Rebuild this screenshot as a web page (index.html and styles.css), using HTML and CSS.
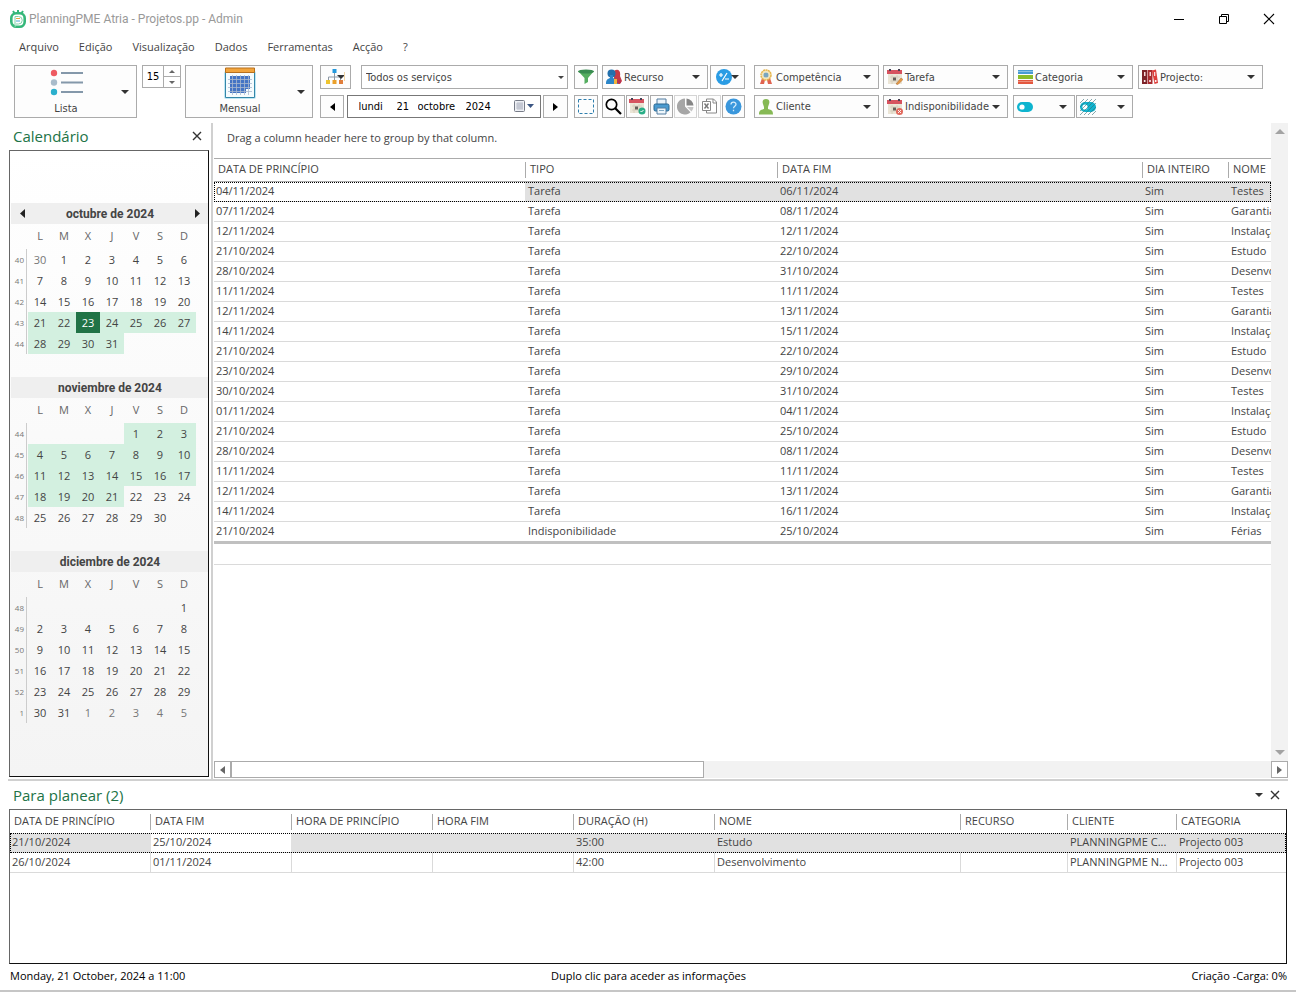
FILE: index.html
```html
<!DOCTYPE html>
<html lang="pt">
<head>
<meta charset="utf-8">
<title>PlanningPME Atria - Projetos.pp - Admin</title>
<link rel="stylesheet" href="styles.css">
</head>
<body>
<svg width="0" height="0" class="defs" aria-hidden="true">
  <symbol id="down" viewBox="0 0 8 4"><path d="M0 0h8L4 4z" fill="currentColor"/></symbol>
  <symbol id="cross" viewBox="0 0 10 10"><path d="M1 1l8 8M9 1l-8 8" stroke="currentColor" stroke-width="1.4" fill="none"/></symbol>
  <symbol id="cal" viewBox="0 0 16 16"><path d="M1 4h14v11H1z" fill="#ebe5d6"/><path d="M0 1h15v4H0z" fill="#d6535f"/><path d="M3 0v2M12 0v2" stroke="#454052" stroke-width="2"/><path d="M3 8h10M3 12h10M5 6v9M10 6v9" stroke="#d3cbb9" stroke-width=".8"/><path d="M6 8.500h3v3H6z" fill="#655f5a"/></symbol>
</svg>
<header class="titlebar">
  <svg class="logo" viewBox="0 0 16 18"><path d="M3 1l2 3M8 0v3M13 1l-2 3" stroke="#35b779" stroke-width="2"/><rect x="1.300" y="3.300" width="13.400" height="13.400" rx="5" fill="#fff" stroke="#35b779" stroke-width="2.600"/><path d="M5 17V6.500h3.500a3.500 3.500 0 0 1 0 7.500H6" fill="#fff" stroke="#7fd3a8" stroke-width="1"/><path d="M6 8.500h4" stroke="#e9a53d"/><path d="M6 11h4" stroke="#4aa5cf"/></svg>
  <h1>PlanningPME Atria - Projetos.pp - Admin</h1>
  <button class="win" aria-label="Minimizar"><svg viewBox="0 0 12 12"><path d="M1 6.500h10" stroke="#000"/></svg></button>
  <button class="win" aria-label="Restaurar"><svg viewBox="0 0 12 12"><path d="M1.500 3.500h7v7h-7zM3.500 3.500v-2h7v7h-2" stroke="#000" fill="none"/></svg></button>
  <button class="win" aria-label="Fechar"><svg viewBox="0 0 12 12"><path d="M1 1l10 10M11 1L1 11" stroke="#000" stroke-width="1.100"/></svg></button>
</header>
<nav class="menu"><a href="#">Arquivo</a><a href="#">Edição</a><a href="#">Visualização</a><a href="#">Dados</a><a href="#">Ferramentas</a><a href="#">Acção</a><a href="#">?</a></nav>

<div class="toolbar">
  <button class="box big lista"><span class="face"><svg width="33" height="32" viewBox="0 0 33 32"><circle cx="4" cy="6" r="3.200" fill="#ee5b62"/><circle cx="4" cy="15.500" r="3.200" fill="#a9bccb"/><circle cx="4" cy="25" r="3.200" fill="#2bb0cd"/><path d="M11 6h22M11 15.500h22M11 25h22" stroke="#8498aa" stroke-width="2"/></svg>Lista</span><svg class="arrow"><use href="#down"/></svg></button>
  <div class="spin"><input type="text" value="15" aria-label="Intervalo"><div><button aria-label="Mais"><svg viewBox="0 0 6 3"><path d="M0 3h6L3 0z" fill="#666"/></svg></button><button aria-label="Menos"><svg viewBox="0 0 6 3"><path d="M0 0h6L3 3z" fill="#666"/></svg></button></div></div>
  <button class="box big mensual"><span class="face"><svg width="32" height="32" viewBox="0 0 32 32"><rect x="0" y="4" width="32" height="28" rx="2" fill="#bfe6f3"/><path d="M1.500 5h29v25.500h-29z" fill="#f5fbfd" stroke="#3486a8"/><path d="M1.500 1h29v4.500h-29z" fill="#f2a43c" stroke="#b8701d"/><path d="M6 9h20v13h-4v4H6z" fill="#4474c4"/><path d="M4 12.500h24M4 16.500h24M4 20.500h24M4 24.500h24M8.500 8v20M12.500 8v20M16.500 8v20M20.500 8v20M24.500 8v20" stroke="#a9b9cf" stroke-width=".8"/></svg>Mensual</span><svg class="arrow"><use href="#down"/></svg></button>

  <div class="stack services">
    <div class="line spread">
      <button class="box w31" aria-label="Organização"><svg width="20" height="16" viewBox="0 0 20 16"><path d="M8.500 4v4M2.500 11V8h12v3M8.500 8v3" stroke="#8e99a5" fill="none"/><path d="M6.500 0h4v4h-4z" fill="#2499dd"/><path d="M0 11h4v4H0z" fill="#eec42f"/><path d="M6.500 11h4v4h-4z" fill="#eaa02b"/><path d="M13 11h4v4h-4z" fill="#e07e3c"/><path d="M11 6h8l-4 4z" fill="#333"/><path d="M18.500 3v9" stroke="#f1d5a6"/></svg></button>
      <div class="combo"><select aria-label="Serviços"><option>Todos os serviços</option></select><svg width="6" height="3"><use href="#down"/></svg></div>
    </div>
    <div class="line spread">
      <button class="box w24" aria-label="Anterior"><svg width="5" height="8" viewBox="0 0 5 8"><path d="M5 0v8L0 4z"/></svg></button>
      <div class="date" role="group" aria-label="Data"><input class="dow" value="lundi" aria-label="Dia da semana"><input class="dd" value="21" aria-label="Dia"><input class="mm" value="octobre" aria-label="Mês"><input class="yy" value="2024" aria-label="Ano"><button aria-label="Abrir calendário"><svg width="21" height="13" viewBox="0 0 21 13"><rect x=".5" y=".5" width="10" height="11" rx="1" fill="#eef0f5" stroke="#777c88"/><path d="M2 4h7M2 6h7M2 8h7M4 2v8M6 2v8M8 2v8" stroke="#a7adba" stroke-width=".7"/><path d="M13 4h7l-3.500 4z" fill="#3b5683"/></svg></button></div>
      <button class="box w25" aria-label="Seguinte"><svg width="5" height="8" viewBox="0 0 5 8"><path d="M0 0v8l5-4z"/></svg></button>
    </div>
  </div>

  <div class="stack w24">
    <button class="box" aria-label="Filtro"><svg width="16" height="16" viewBox="0 0 16 16"><path d="M0 2l6.500 7v6L10 13V9l6-7z" fill="#55ad60"/><ellipse cx="8" cy="2.500" rx="8" ry="2" fill="#398b50"/></svg></button>
    <button class="box" aria-label="Seleção"><svg width="16" height="15" viewBox="0 0 16 15"><path d="M.5.5h15v14H.5z" fill="none" stroke="#2f7fae" stroke-dasharray="3 2"/></svg></button>
  </div>

  <div class="stack tools">
    <div class="line spread">
      <button class="box pick w106"><svg class="ico" viewBox="0 0 16 16"><path d="M8 2c4-3 7 0 6 5l2 5-2 3H8z" fill="#c63a46"/><circle cx="5.500" cy="4.500" r="4" fill="#2270ad"/><path d="M0 15c0-5 2-5 4-6V6h3v3c3 1 5 2 5 6z" fill="#2b86c9"/><path d="M8 10h3v5H8z" fill="#efb33c"/><path d="M11 11h4v3h-4z" fill="#b93251"/></svg><span>Recurso</span><svg class="arrow"><use href="#down"/></svg></button>
      <button class="box w35" aria-label="Cálculo"><svg width="24" height="18" viewBox="0 0 24 18"><circle cx="8" cy="9" r="8" fill="#2a9ce4"/><path d="M3 7h4M5 5v4M6 13l5-8M9 11h4" stroke="#fff" stroke-width="1.200"/><path d="M15 7h8l-4 4z" fill="#333"/></svg></button>
    </div>
    <div class="line tight">
      <button class="box" aria-label="Procurar"><svg width="17" height="17" viewBox="0 0 17 17"><circle cx="6.500" cy="6.500" r="5.200" fill="none" stroke="#000" stroke-width="1.700"/><path d="M10 10l6 6" stroke="#000" stroke-width="2.200"/></svg></button>
      <button class="box" aria-label="Validar"><svg width="17" height="17" viewBox="0 0 17 17"><use href="#cal" width="16" height="16"/><circle cx="13" cy="13" r="3.500" fill="#2aae87"/><path d="M11.500 13l1 1 2-2" stroke="#fff" fill="none"/></svg></button>
      <button class="box" aria-label="Imprimir"><svg width="17" height="17" viewBox="0 0 17 17"><path d="M4 6V1h9v5" fill="#eaf3fa" stroke="#527da0"/><rect x="1" y="6" width="15" height="7" rx="1.500" fill="#4a9bd0" stroke="#27658f"/><path d="M4 10h9v6H4z" fill="#eef6fb" stroke="#527da0"/><path d="M6 12.500h5" stroke="#7faac5"/></svg></button>
      <button class="box off" aria-label="Gráfico"><svg width="17" height="17" viewBox="0 0 17 17"><path d="M8 8.500V.5a8 8 0 1 0 5.500 13.700z" fill="#a6a6a6"/><path d="M9.500 7.500V.5a7.500 7.500 0 0 1 7 7z" fill="#868686"/><path d="M10 9h6.500a7 7 0 0 1-2 4.500z" fill="#c5c5c5"/></svg></button>
      <button class="box off" aria-label="Exportar Excel"><svg width="17" height="17" viewBox="0 0 17 17"><path d="M5.500 3V1h7l3 3v11h-10v-3" fill="#fff" stroke="#888"/><path d="M12 1v4h4" fill="none" stroke="#888"/><path d="M1.500 3.500h8v9h-8z" fill="#fff" stroke="#888"/><path d="M3.500 5.500l4 5M7.500 5.500l-4 5" stroke="#777" stroke-width="1.400"/></svg></button>
      <button class="box" aria-label="Ajuda"><svg width="17" height="17" viewBox="0 0 17 17"><circle cx="8.500" cy="8.500" r="8" fill="#3a97dc"/><path d="M6 6.500C6 3.500 11 3.500 11 6.300c0 2-2.500 2-2.500 4M8.500 11.800v1.500" stroke="#d5ecfb" stroke-width="1.300" fill="none"/></svg></button>
    </div>
  </div>

  <div class="stack filters">
    <button class="box pick"><svg class="ico" viewBox="0 0 16 16"><path d="M4 9l-2 6h4l1-4zM12 9l2 6h-4l-1-4z" fill="#df624f"/><circle cx="8" cy="6" r="5" fill="#f4e5bc" stroke="#e7b64d" stroke-width="1.500" stroke-dasharray="2 .5"/><circle cx="8" cy="6" r="2.600" fill="#8ebad0"/><path d="M6 5h4M6 7h4" stroke="#56809d" stroke-width=".7"/></svg><span>Competência</span><svg class="arrow"><use href="#down"/></svg></button>
    <button class="box pick"><svg class="ico" viewBox="0 0 16 16"><path d="M8 0c3 0 4 2 3 5l-1 3v2c4 1 5 2 5 5.500H1C1 12 2 11 6 10V8L5 5C4 2 5 0 8 0z" fill="#86b955"/></svg><span>Cliente</span><svg class="arrow"><use href="#down"/></svg></button>
  </div>
  <div class="stack filters">
    <button class="box pick"><svg class="ico" viewBox="0 0 16 16"><use href="#cal" width="16" height="16"/><path d="M9 15l5-6 2 1.500-5 5z" fill="#e69945" stroke="#a86a31" stroke-width=".5"/></svg><span>Tarefa</span><svg class="arrow"><use href="#down"/></svg></button>
    <button class="box pick"><svg class="ico" viewBox="0 0 16 16"><use href="#cal" width="16" height="16"/><circle cx="12.500" cy="12.500" r="3.500" fill="#e1695d"/><path d="M11 11l3 3M14 11l-3 3" stroke="#fff" stroke-width=".9"/></svg><span>Indisponibilidade</span><svg class="arrow"><use href="#down"/></svg></button>
  </div>
  <div class="stack cats">
    <button class="box pick"><svg class="ico" viewBox="0 0 16 16"><path d="M1 1h15v4H1z" fill="#489bd3"/><path d="M1 6h15v4H1z" fill="#8abd2a"/><path d="M1 11h15v4H1z" fill="#e3573f"/><path d="M1 2.500h15" stroke="#b6dcf1" stroke-width=".6"/><path d="M1 12.500h15" stroke="#f3b3a5" stroke-width=".6"/></svg><span>Categoria</span><svg class="arrow"><use href="#down"/></svg></button>
    <div class="line tight">
      <button class="box pick w62" aria-label="Estado"><svg class="ico" viewBox="0 0 16 16"><rect x="0" y="3" width="16" height="10" rx="5" fill="#0eb4cf"/><circle cx="5" cy="8" r="2.600" fill="#fff"/></svg><span></span><svg class="arrow"><use href="#down"/></svg></button>
      <button class="box pick w57" aria-label="Estado parcial"><svg class="ico" viewBox="0 0 16 16"><rect x="0" y="3" width="16" height="10" rx="5" fill="#0eb4cf"/><circle cx="5" cy="8" r="2.600" fill="#fff"/><path d="M0 4l4-4M0 8l8-8M0 12L12 0M0 16L16 0M4 16L16 4M8 16l8-8M12 16l4-4" stroke="#356e79" stroke-width=".6"/></svg><span></span><svg class="arrow"><use href="#down"/></svg></button>
    </div>
  </div>
  <div class="stack filters">
    <button class="box pick"><svg class="ico" viewBox="0 0 16 16"><path d="M0 1h5v14H0z" fill="#7d2329"/><path d="M5.500 1h5v14h-5z" fill="#a92c31"/><path d="M10 1.500L14 .5l2 13.500-3.500 1z" fill="#dd3f3c"/><path d="M2 3h1.500v4H2zM7.500 3H9v4H7.500zM12 3h1.300v4H12z" fill="#f6dada"/><circle cx="2.700" cy="12" r="1" fill="#fff"/><circle cx="8" cy="12" r="1" fill="#fff"/><circle cx="13.700" cy="12" r="1" fill="#fff"/></svg><span>Projecto:</span><svg class="arrow"><use href="#down"/></svg></button>
  </div>
</div>

<div class="work">
  <aside class="side">
    <div class="panel-head"><h2>Calendário</h2><button aria-label="Fechar calendário"><svg width="10" height="10"><use href="#cross"/></svg></button></div>
    <div class="months">
      <section class="month">
        <h3><button aria-label="Mês anterior"><svg width="5" height="9" viewBox="0 0 5 9"><path d="M5 0v9L0 4.500z" fill="#222"/></svg></button><span>octubre de 2024</span><button aria-label="Mês seguinte"><svg width="5" height="9" viewBox="0 0 5 9"><path d="M0 0v9l5-4.500z" fill="#222"/></svg></button></h3>
        <table>
          <thead><tr><td></td><th>L</th><th>M</th><th>X</th><th>J</th><th>V</th><th>S</th><th>D</th></tr></thead>
          <tbody>
          <tr><th>40</th><td class="out">30</td><td>1</td><td>2</td><td>3</td><td>4</td><td>5</td><td>6</td></tr>
          <tr><th>41</th><td>7</td><td>8</td><td>9</td><td>10</td><td>11</td><td>12</td><td>13</td></tr>
          <tr><th>42</th><td>14</td><td>15</td><td>16</td><td>17</td><td>18</td><td>19</td><td>20</td></tr>
          <tr class="sel"><th>43</th><td>21</td><td>22</td><td class="today">23</td><td>24</td><td>25</td><td>26</td><td>27</td></tr>
          <tr class="sel"><th>44</th><td>28</td><td>29</td><td>30</td><td>31</td><td class="no"></td><td class="no"></td><td class="no"></td></tr>
          </tbody>
        </table>
      </section>
      <section class="month">
        <h3><span>noviembre de 2024</span></h3>
        <table>
          <thead><tr><td></td><th>L</th><th>M</th><th>X</th><th>J</th><th>V</th><th>S</th><th>D</th></tr></thead>
          <tbody>
          <tr class="sel"><th>44</th><td class="no"></td><td class="no"></td><td class="no"></td><td class="no"></td><td>1</td><td>2</td><td>3</td></tr>
          <tr class="sel"><th>45</th><td>4</td><td>5</td><td>6</td><td>7</td><td>8</td><td>9</td><td>10</td></tr>
          <tr class="sel"><th>46</th><td>11</td><td>12</td><td>13</td><td>14</td><td>15</td><td>16</td><td>17</td></tr>
          <tr class="sel"><th>47</th><td>18</td><td>19</td><td>20</td><td>21</td><td class="no">22</td><td class="no">23</td><td class="no">24</td></tr>
          <tr><th>48</th><td>25</td><td>26</td><td>27</td><td>28</td><td>29</td><td>30</td><td></td></tr>
          </tbody>
        </table>
      </section>
      <section class="month">
        <h3><span>diciembre de 2024</span></h3>
        <table>
          <thead><tr><td></td><th>L</th><th>M</th><th>X</th><th>J</th><th>V</th><th>S</th><th>D</th></tr></thead>
          <tbody>
          <tr><th>48</th><td></td><td></td><td></td><td></td><td></td><td></td><td>1</td></tr>
          <tr><th>49</th><td>2</td><td>3</td><td>4</td><td>5</td><td>6</td><td>7</td><td>8</td></tr>
          <tr><th>50</th><td>9</td><td>10</td><td>11</td><td>12</td><td>13</td><td>14</td><td>15</td></tr>
          <tr><th>51</th><td>16</td><td>17</td><td>18</td><td>19</td><td>20</td><td>21</td><td>22</td></tr>
          <tr><th>52</th><td>23</td><td>24</td><td>25</td><td>26</td><td>27</td><td>28</td><td>29</td></tr>
          <tr><th>1</th><td>30</td><td>31</td><td class="out">1</td><td class="out">2</td><td class="out">3</td><td class="out">4</td><td class="out">5</td></tr>
          </tbody>
        </table>
      </section>
    </div>
  </aside>

  <main class="list">
    <div class="view">
      <p class="group-hint">Drag a column header here to group by that column.</p>
      <table class="grid tasks">
        <colgroup><col class="c311"><col class="c252"><col><col class="c86"><col class="c43"></colgroup>
        <thead><tr><th><span>DATA DE PRINCÍPIO</span></th><th><span>TIPO</span></th><th><span>DATA FIM</span></th><th><span>DIA INTEIRO</span></th><th><span>NOME</span></th></tr></thead>
        <tbody>
        <tr class="cur"><td class="focus">04/11/2024</td><td>Tarefa</td><td>06/11/2024</td><td>Sim</td><td>Testes</td></tr>
        <tr><td>07/11/2024</td><td>Tarefa</td><td>08/11/2024</td><td>Sim</td><td>Garantia</td></tr>
        <tr><td>12/11/2024</td><td>Tarefa</td><td>12/11/2024</td><td>Sim</td><td>Instalação</td></tr>
        <tr><td>21/10/2024</td><td>Tarefa</td><td>22/10/2024</td><td>Sim</td><td>Estudo</td></tr>
        <tr><td>28/10/2024</td><td>Tarefa</td><td>31/10/2024</td><td>Sim</td><td>Desenvolvimento</td></tr>
        <tr><td>11/11/2024</td><td>Tarefa</td><td>11/11/2024</td><td>Sim</td><td>Testes</td></tr>
        <tr><td>12/11/2024</td><td>Tarefa</td><td>13/11/2024</td><td>Sim</td><td>Garantia</td></tr>
        <tr><td>14/11/2024</td><td>Tarefa</td><td>15/11/2024</td><td>Sim</td><td>Instalação</td></tr>
        <tr><td>21/10/2024</td><td>Tarefa</td><td>22/10/2024</td><td>Sim</td><td>Estudo</td></tr>
        <tr><td>23/10/2024</td><td>Tarefa</td><td>29/10/2024</td><td>Sim</td><td>Desenvolvimento</td></tr>
        <tr><td>30/10/2024</td><td>Tarefa</td><td>31/10/2024</td><td>Sim</td><td>Testes</td></tr>
        <tr><td>01/11/2024</td><td>Tarefa</td><td>04/11/2024</td><td>Sim</td><td>Instalação</td></tr>
        <tr><td>21/10/2024</td><td>Tarefa</td><td>25/10/2024</td><td>Sim</td><td>Estudo</td></tr>
        <tr><td>28/10/2024</td><td>Tarefa</td><td>08/11/2024</td><td>Sim</td><td>Desenvolvimento</td></tr>
        <tr><td>11/11/2024</td><td>Tarefa</td><td>11/11/2024</td><td>Sim</td><td>Testes</td></tr>
        <tr><td>12/11/2024</td><td>Tarefa</td><td>13/11/2024</td><td>Sim</td><td>Garantia</td></tr>
        <tr><td>14/11/2024</td><td>Tarefa</td><td>16/11/2024</td><td>Sim</td><td>Instalação</td></tr>
        <tr><td>21/10/2024</td><td>Indisponibilidade</td><td>25/10/2024</td><td>Sim</td><td>Férias</td></tr>
        </tbody>
      </table>
      <div class="new-row"></div>
    </div>
    <div class="vbar"><svg width="10" height="5" viewBox="0 0 10 5"><path d="M0 5h10L5 0z" fill="#a3a3a3"/></svg><svg width="10" height="5" viewBox="0 0 10 5"><path d="M0 0h10L5 5z" fill="#a3a3a3"/></svg></div>
    <div class="hbar"><button aria-label="Para a esquerda"><svg width="5" height="8" viewBox="0 0 5 8"><path d="M5 0v8L0 4z" fill="#666"/></svg></button><div class="thumb"></div><button class="end" aria-label="Para a direita"><svg width="5" height="8" viewBox="0 0 5 8"><path d="M0 0v8l5-4z" fill="#666"/></svg></button></div>
  </main>
</div>

<section class="plan">
  <div class="panel-head"><h2>Para planear (2)</h2><button aria-label="Opções"><svg width="8" height="4"><use href="#down"/></svg></button><button aria-label="Fechar painel"><svg width="10" height="10"><use href="#cross"/></svg></button></div>
  <div class="plan-box">
    <table class="grid todo">
      <colgroup><col class="c140"><col class="c141"><col class="c141"><col class="c141"><col class="c141"><col><col class="c107"><col class="c109"><col class="c110"></colgroup>
      <thead><tr><th><span>DATA DE PRINCÍPIO</span></th><th><span>DATA FIM</span></th><th><span>HORA DE PRINCÍPIO</span></th><th><span>HORA FIM</span></th><th><span>DURAÇÃO (H)</span></th><th><span>NOME</span></th><th><span>RECURSO</span></th><th><span>CLIENTE</span></th><th><span>CATEGORIA</span></th></tr></thead>
      <tbody>
      <tr class="cur"><td>21/10/2024</td><td class="focus">25/10/2024</td><td></td><td></td><td>35:00</td><td>Estudo</td><td></td><td>PLANNINGPME C...</td><td>Projecto 003</td></tr>
      <tr><td>26/10/2024</td><td>01/11/2024</td><td></td><td></td><td>42:00</td><td>Desenvolvimento</td><td></td><td>PLANNINGPME N...</td><td>Projecto 003</td></tr>
      </tbody>
    </table>
  </div>
</section>
<footer class="status"><span>Monday, 21 October, 2024 a 11:00</span><span>Duplo clic para aceder as informações</span><span>Criação -Carga: 0%</span></footer>
</body>
</html>
```
FILE: styles.css
```css
* { box-sizing: border-box; }
body {
  margin: 0;
  height: 100vh;
  display: flex;
  flex-direction: column;
  background: #fff;
  color: #444;
  font: 11px/16px "Open Sans", "Noto Sans", sans-serif;
}
button, input, select { font: inherit; color: inherit; margin: 0; padding: 0; border: 0; background: none; outline: 0; border-radius: 0; }
h1, h2, h3, p { margin: 0; font-weight: 400; }
svg { display: block; flex: none; }
.defs { position: absolute; }

.titlebar { display: flex; align-items: center; height: 37px; padding: 0 5px 0 10px; flex: none; }
.logo { width: 16px; height: 18px; }
.titlebar h1 { flex: 1; margin-left: 3px; font-family: Roboto, "Open Sans", sans-serif; font-size: 12px; color: #999; }
.win { width: 45px; height: 32px; display: flex; align-items: center; justify-content: center; }
.win svg { width: 12px; height: 12px; }

.menu { display: flex; gap: 20px; height: 28px; padding: 2px 19px; flex: none; }
.menu a { color: #444; text-decoration: none; }

.toolbar { display: flex; align-items: flex-start; height: 58px; padding-left: 14px; flex: none; font: 11px/16px "DejaVu Sans Condensed", "DejaVu Sans", sans-serif; }
.box { border: 1px solid #ababab; background: #fdfdfd; height: 23px; display: flex; align-items: center; justify-content: center; flex: none; }
.stack { display: flex; flex-direction: column; gap: 6px; flex: none; }
.stack > .box { width: 100%; }
.stack > .box:first-child, .line:first-child > .box { height: 24px; }
.line { display: flex; }
.spread { justify-content: space-between; }
.tight { gap: 1px; }
.big { height: 53px; justify-content: flex-start; }
.big .face { width: 102px; display: flex; flex-direction: column; align-items: center; gap: 2px; }
.big .arrow { margin-left: auto; margin-right: 7px; }
.lista { width: 123px; }
.mensual { width: 128px; }
.mensual .face { width: 108px; }
.arrow { width: 8px; height: 4px; color: #333; }
.spin { display: flex; width: 39px; height: 23px; margin: 0 4px 0 5px; border: 1px solid #ababab; }
.spin input { width: 20px; text-align: center; color: #000; }
.spin div { flex: 1; display: flex; flex-direction: column; border-left: 1px solid #ababab; }
.spin button { flex: 1; display: flex; align-items: center; justify-content: center; }
.spin button + button { border-top: 1px solid #ababab; }
.spin svg { width: 6px; height: 3px; }
.services { width: 248px; margin: 0 6px 0 7px; }
.combo { width: 207px; height: 24px; border: 1px solid #ababab; display: flex; align-items: center; padding-right: 3px; }
.combo select { flex: 1; appearance: none; padding: 2px 0 0 4px; }
.date { width: 194px; height: 23px; border: 1px solid #777; display: flex; align-items: center; padding-left: 11px; color: #000; }
.date input { padding-top: 1px; }
.dow { width: 38px; }
.dd { width: 21px; }
.mm { width: 48px; }
.yy { width: 48px; }
.w24 { width: 24px; }
.w25 { width: 25px; }
.w31 { width: 31px; }
.w35 { width: 35px; }
.w57 { width: 57px; }
.w62 { width: 62px; }
.w106 { width: 106px; }
.tools { width: 143px; margin: 0 9px 0 4px; }
.tools .tight .box { width: 23px; }
.off { border-color: #d4d4d4; }
.filters { width: 125px; margin-right: 4px; }
.cats { width: 120px; margin: 0 5px 0 1px; }
.pick { justify-content: flex-start; padding: 0 7px 0 3px; }
.pick .ico { width: 16px; height: 16px; }
.pick span { flex: 1; text-align: left; padding: 1px 0 0 2px; }

.work { flex: 1; min-height: 0; display: flex; margin: 0 8px; border-bottom: 2px solid #d0d0d0; }
.side { width: 205px; flex: none; display: flex; flex-direction: column; border-right: 2px solid #d0d0d0; padding: 0 2px 2px 1px; }
.panel-head { display: flex; align-items: center; height: 27px; padding: 0 7px 2px 4px; flex: none; gap: 7px; color: #333; }
.panel-head h2 { flex: 1; font-size: 15px; line-height: 20px; color: #217346; }
.panel-head button { display: flex; align-items: center; height: 16px; }
.months { flex: 1; min-height: 0; border: 1px solid #666; border-right-color: #111; border-bottom-color: #111; background: linear-gradient(#fff, #f4f4f4); padding: 52px 0 0 1px; }
.month { height: 174px; }
.month h3 { display: flex; align-items: center; justify-content: center; height: 21px; padding: 0 8px 0 9px; background: #efefef; font: 700 12px/16px Roboto, "Open Sans", sans-serif; }
.month h3 span { flex: 1; text-align: center; }
.month h3 button { width: 5px; }
.month table { border-collapse: collapse; table-layout: fixed; width: 185px; text-align: center; }
.month td, .month th { padding: 0; height: 21px; width: 24px; font-weight: 400; }
.month thead th, .month thead td { height: 25px; padding-bottom: 2px; color: #666; }
.month tr > :first-child { width: 17px; }
.month tbody th { background: linear-gradient(#ccc, #ccc) no-repeat right 1px top / 1px 100%; color: #777; font-size: 8px; line-height: 12px; text-align: right; padding-right: 4px; }
.month .sel td { background: #d3f0e0; }
.month .sel .no { background: none; }
.month .sel .today { background: #217346; color: #fff; }
.month .out { color: #777; }

.list { flex: 1; min-width: 0; display: grid; grid-template: minmax(0, 1fr) 17px / minmax(0, 1fr) 17px; padding: 0 0 1px 1px; }
.view { overflow: hidden; }
.group-hint { height: 35px; padding: 7px 13px; }
.grid { width: 100%; border-collapse: separate; border-spacing: 0; table-layout: fixed; }
.grid th, .grid td { padding: 0 0 0 2px; text-align: left; font-weight: 400; white-space: nowrap; overflow: hidden; }
.grid th { padding: 0; height: 23px; }
.grid th span { display: block; height: 16px; line-height: 14px; padding-left: 4px; }
.grid th + th span { border-left: 1px solid #ababab; }
.grid td { height: 20px; line-height: 16px; padding-bottom: 1px; border-bottom: 1px solid #dadada; }
.grid .cur td { background: #e1e1e1; }
.grid .cur .focus { background: #fff; }
.grid .cur { outline: 1px dotted #000; outline-offset: -1px; }
.tasks th { height: 24px; border-top: 1px solid #ababab; border-bottom: 1px solid #ababab; }
.tasks td + td { padding-left: 3px; }
.tasks tr:last-child td { border-bottom-color: #c0c0c0; }
.c311 { width: 311px; } .c252 { width: 252px; } .c86 { width: 86px; } .c43 { width: 43px; }
.c140 { width: 140px; } .c141 { width: 141px; } .c107 { width: 107px; } .c109 { width: 109px; } .c110 { width: 110px; }
.new-row { height: 23px; border-top: 2px solid #c0c0c0; border-bottom: 1px solid #dadada; }
.vbar { background: #f2f2f2; display: flex; flex-direction: column; align-items: center; justify-content: space-between; padding: 6px 0; }
.hbar { grid-column: 1 / -1; display: flex; background: #f2f2f2; }
.hbar button { width: 17px; display: flex; align-items: center; justify-content: center; border: 1px solid #ababab; background: #fff; }
.thumb { width: 44%; border: 1px solid #ababab; background: #fff; }
.hbar .end { margin-left: auto; }

.plan { height: 183px; flex: none; padding: 1px 9px 0; display: flex; flex-direction: column; }
.plan-box { flex: 1; border: 1px solid #666; border-right-color: #111; border-bottom-color: #111; }
.todo td + td { border-left: 1px solid #dadada; }
.todo .cur td { border-left-color: #e1e1e1; }
.status { height: 28px; flex: none; display: grid; grid-template-columns: 1fr auto 1fr; padding: 4px 9px 0 10px; border-bottom: 2px solid #c6c6c6; color: #000; }
.status span:last-child { text-align: right; }
```
